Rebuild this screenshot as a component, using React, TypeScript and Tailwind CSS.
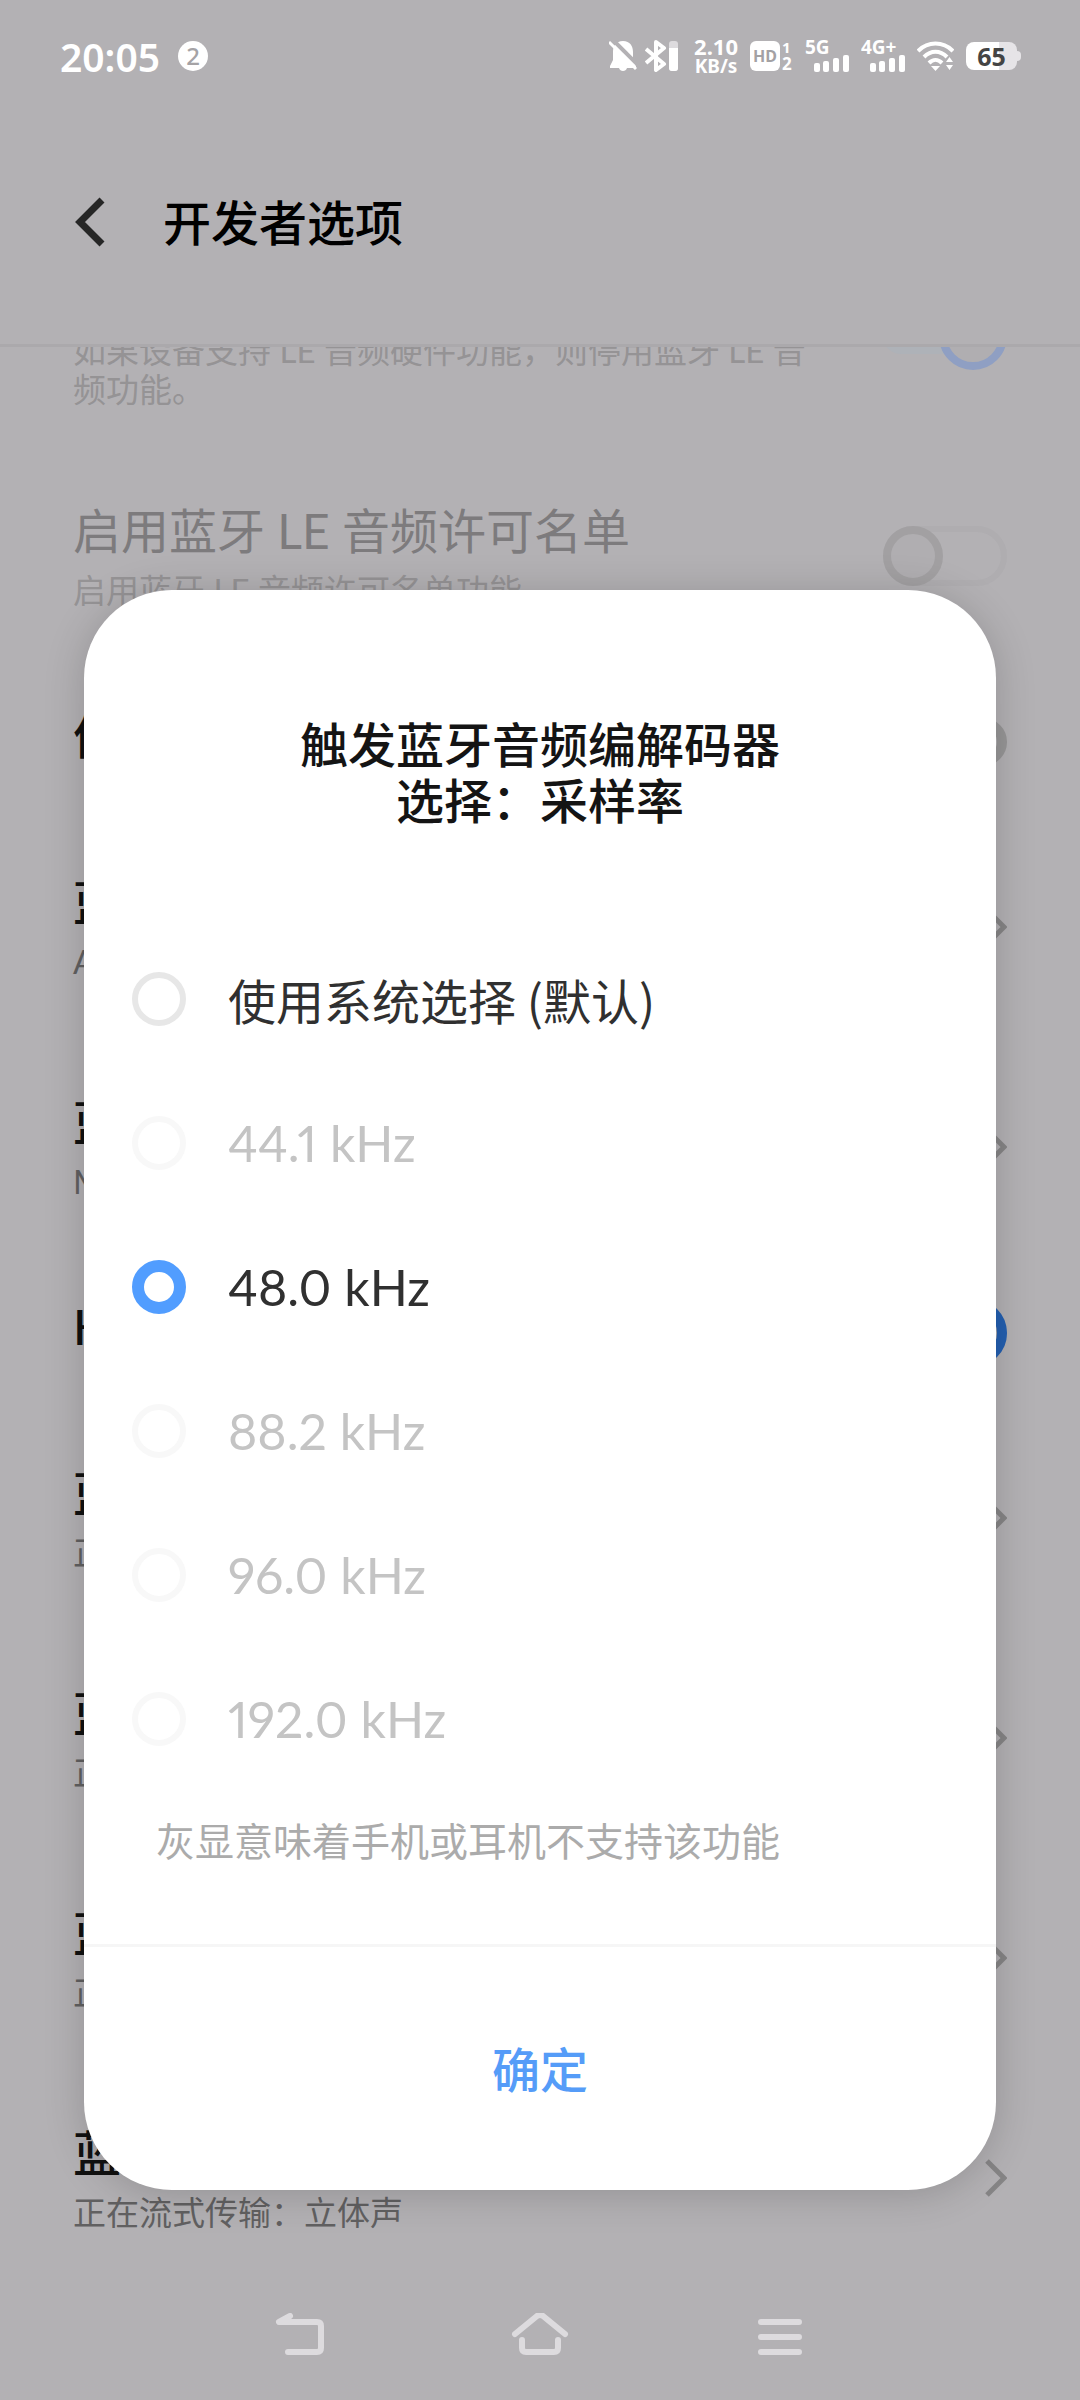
import React, { useState } from 'react';
import clsx from 'clsx';

interface Setting {
  title: string;
  summary?: string;
  control: 'on' | 'off' | 'link';
  disabled?: boolean;
}

const settings: Setting[] = [
  {
    title: '停用蓝牙 LE 音频',
    summary: '如果设备支持 LE 音频硬件功能，则停用蓝牙 LE 音频功能。',
    control: 'on',
    disabled: true,
  },
  { title: '启用蓝牙 LE 音频许可名单', summary: '启用蓝牙 LE 音频许可名单功能', control: 'off', disabled: true },
  { title: '停用绝对音量功能', control: 'off' },
  { title: '蓝牙 AVRCP 版本', summary: 'AVRCP 1.5（默认）', control: 'link' },
  { title: '蓝牙 MAP 版本', summary: 'MAP 1.2（默认）', control: 'link' },
  { title: 'HD 音频', control: 'on' },
  { title: '蓝牙音频编解码器', summary: '正在流式传输：AAC', control: 'link' },
  { title: '蓝牙音频采样率', summary: '正在流式传输：48.0 kHz', control: 'link' },
  { title: '蓝牙音频每样本位数', summary: '正在流式传输：16 位', control: 'link' },
  { title: '蓝牙音频声道模式', summary: '正在流式传输：立体声', control: 'link' },
];

const sampleRates = [
  { id: 'default', label: '使用系统选择 (默认)', disabled: false },
  { id: '44.1', label: '44.1 kHz', disabled: true },
  { id: '48.0', label: '48.0 kHz', disabled: false },
  { id: '88.2', label: '88.2 kHz', disabled: true },
  { id: '96.0', label: '96.0 kHz', disabled: true },
  { id: '192.0', label: '192.0 kHz', disabled: true },
];

const Signal: React.FC<{ label: string }> = ({ label }) => (
  <svg width="44" height="36" viewBox="0 0 44 36" fill="#fff">
    <text x="0" y="16" fontSize="19" fontWeight="700" fontFamily="Noto Sans, sans-serif">{label}</text>
    <rect x="9" y="25" width="6" height="9" rx="2" />
    <rect x="18" y="23" width="6" height="11" rx="2" />
    <rect x="28" y="20" width="6" height="14" rx="2" />
    <rect x="38" y="17" width="6" height="17" rx="2" />
  </svg>
);

const StatusBar = () => (
  <div className="flex h-28 shrink-0 items-center justify-between pr-[59px] pl-[60px] text-white">
    <div className="flex items-center gap-[18px] font-['Noto_Sans']">
      <span className="text-[39px] leading-none font-semibold">20:05</span>
      <span className="flex size-[30px] items-center justify-center rounded-full bg-white text-[24px] leading-none font-medium text-[#a5a3a6]">
        2
      </span>
    </div>
    <div className="flex items-center gap-3">
      <div className="mr-1 flex items-center gap-2">
        <svg width="28" height="32" viewBox="0 0 28 32">
          <path d="M14 1C7 1 4 6 4 12v8l-3 6v2h9c1 4 7 4 8 0h9v-2l-3-6v-8C24 6 21 1 14 1z" fill="#fff" />
          <path d="M3 -1l27 27" stroke="#b3b1b4" strokeWidth="4" />
          <path d="M0 2l27 27" stroke="#fff" strokeWidth="3" />
        </svg>
        <svg width="33" height="32" viewBox="0 0 33 32" fill="none">
          <path d="M1 9l18 15-8 6V2l8 6L1 23" stroke="#fff" strokeWidth="4" strokeLinejoin="round" />
          <rect x="24" y="1" width="9" height="30" rx="3" fill="#dddbde" />
          <path d="M24 8h9v20a3 3 0 0 1-3 3h-3a3 3 0 0 1-3-3z" fill="#fff" />
        </svg>
      </div>
      <div className="flex flex-col items-center font-['Noto_Sans'] font-bold">
        <span className="text-[22px] leading-5">2.10</span>
        <span className="text-[19px] leading-5">KB/s</span>
      </div>
      <svg width="43" height="32" viewBox="0 0 43 32" fontFamily="Noto Sans, sans-serif" fontWeight="700" fill="#fff">
        <rect x="0" y="1" width="30" height="30" rx="6" />
        <text x="3" y="22" fontSize="16" fill="#a3a1a4">HD</text>
        <text x="32" y="13" fontSize="15">1</text>
        <text x="32" y="30" fontSize="17">2</text>
      </svg>
      <Signal label="5G" />
      <Signal label="4G+" />
      <svg width="37" height="32" viewBox="0 0 37 32" fill="none" stroke="#fff" strokeWidth="4">
        <path d="M1 11c10-10 25-10 35 0" />
        <path d="M7 17c7-7 16-7 23 0" />
        <path d="M12 23c4-4 9-4 13 0" />
        <path d="M14 26h9l-4.500 5z" fill="#fff" stroke="none" />
        <path d="M29 22l3.500-5 3.500 5zM29 25h7l-3.500 5z" fill="#fff" stroke="none" />
      </svg>
      <div className="flex items-center">
        <span className="flex h-7 w-[51px] items-center justify-center rounded-lg bg-linear-to-r from-white from-65% to-[#e6e4e7] to-65% font-['Noto_Sans'] text-[25px] leading-none font-bold text-[#444]">
          65
        </span>
        <span className="h-2.5 w-1 rounded-r bg-[#e6e4e7]" />
      </div>
    </div>
  </div>
);

const Toggle: React.FC<{ label: string; on: boolean; disabled?: boolean }> = ({ label, on, disabled }) => (
  <button
    role="switch"
    aria-checked={on}
    aria-label={label}
    disabled={disabled}
    className={clsx(
      'flex w-[124px] shrink-0 items-center rounded-full',
      on && 'h-9 justify-end',
      on && (disabled ? 'bg-[#aeb2b8]' : 'bg-[#7f99bd]'),
      !on && (disabled ? 'h-[60px] border-[6px] border-[#acaaad]/60' : 'h-12 border-[10px] border-[#979697]')
    )}
  >
    <span
      className={clsx(
        'shrink-0 rounded-full bg-[#b0aeb1]',
        on ? 'size-[68px]' : '-ml-1.5 size-[60px]',
        on && (disabled ? 'border-8 border-[#8f9fc3]' : 'border-[10px] border-[#235fb0]'),
        !on && (disabled ? 'border-8 border-[#a2a0a2]' : 'border-8 border-[#979597]')
      )}
    />
  </button>
);

const SettingRow: React.FC<{ setting: Setting }> = ({ setting }) => {
  const { title, summary, control, disabled } = setting;
  return (
    <li
      className={clsx(
        "flex shrink-0 items-center justify-between px-[73px] font-['Lato','Noto_Sans_CJK_SC',sans-serif]",
        summary ? 'h-[220px]' : 'h-[151px]'
      )}
    >
      <div className={clsx('flex max-w-[740px] flex-col gap-3', !summary && 'pb-3')}>
        <h2
          className={clsx(
            'text-[48px] leading-[56px]',
            disabled ? 'font-normal text-[#7d7b7d]' : 'font-medium text-[#111]'
          )}
        >
          {title}
        </h2>
        {summary && (
          <p className={clsx('text-[33px] leading-[39px]', disabled ? 'text-[#959395]' : 'text-[#616061]')}>
            {summary}
          </p>
        )}
      </div>
      {control === 'link' ? (
        <svg width="22" height="38" viewBox="0 0 22 38" fill="none" stroke="#868586" strokeWidth="5">
          <path d="M2 2l17 17L2 36" />
        </svg>
      ) : (
        <Toggle label={title} on={control === 'on'} disabled={disabled} />
      )}
    </li>
  );
};

const NavBar = () => (
  <nav className="flex h-28 shrink-0 items-center justify-center pb-3.5">
    <button aria-label="返回" className="flex w-60 justify-center">
      <svg width="52" height="48" viewBox="0 0 52 48" fill="none" stroke="#dddbde" strokeWidth="6" strokeLinecap="round" strokeLinejoin="round">
        <path d="M16 3L5 9h38q4 0 4 4v22q0 4-4 4H14" />
      </svg>
    </button>
    <button aria-label="主屏幕" className="flex w-60 justify-center">
      <svg width="60" height="48" viewBox="0 0 60 48" fill="none" stroke="#dddbde" strokeWidth="6" strokeLinecap="round" strokeLinejoin="round">
        <path d="M5 21L27 3q3-2 6 0l22 18M12 27v8q0 4 4 4h28q4 0 4-4v-8" />
      </svg>
    </button>
    <button aria-label="最近任务" className="flex w-60 justify-center">
      <svg width="46" height="48" viewBox="0 0 46 48" stroke="#dddbde" strokeWidth="6" strokeLinecap="round">
        <path d="M4 9h38M4 24h38M4 39h38" />
      </svg>
    </button>
  </nav>
);

const SampleRateDialog = () => {
  const [selected, setSelected] = useState('48.0');

  return (
    <div
      role="dialog"
      aria-labelledby="dialog-title"
      className="absolute inset-x-[84px] bottom-[210px] overflow-hidden rounded-[88px] bg-white pt-[124px] shadow-[0_4px_40px_rgba(0,0,0,0.18)]"
    >
      <h2 id="dialog-title" className="text-center text-[48px] leading-[56px] font-medium text-[#141414]">
        触发蓝牙音频编解码器
        <br />
        选择：采样率
      </h2>
      <div className="mt-[101px] flex flex-col">
        {sampleRates.map((rate) => (
          <label
            key={rate.id}
            className={clsx(
              'flex h-36 items-center gap-[42px] px-12',
              rate.disabled ? 'text-[#c4c4c4]' : 'text-[#303030]',
              rate.id === 'default' ? 'text-[48px]' : "font-['Lato'] text-[50px] proportional-nums"
            )}
          >
            <input
              type="radio"
              name="sample-rate"
              value={rate.id}
              checked={selected === rate.id}
              disabled={rate.disabled}
              onChange={() => setSelected(rate.id)}
              className="size-[54px] shrink-0 appearance-none rounded-full border-[6px] border-[#e7e7e7] checked:border-[12px] checked:border-[#519dff] disabled:border-[#f8f8f8]"
            />
            <span>{rate.label}</span>
          </label>
        ))}
      </div>
      <p className="px-[72px] pt-5 pb-[77px] text-[39px] leading-[56px] text-[#ababab]">
        灰显意味着手机或耳机不支持该功能
      </p>
      <button className="h-[246px] w-full border-t-[3px] border-[#f6f6f6] pb-1 text-[48px] font-medium text-[#559cf8]">
        确定
      </button>
    </div>
  );
};

export default function App() {
  return (
    <div className="relative flex h-screen flex-col overflow-hidden bg-[#b3b1b4] font-['Noto_Sans_CJK_SC',sans-serif]">
      <StatusBar />
      <header className="flex h-[235px] shrink-0 items-center gap-[58px] border-b-[3px] border-[#aba9ac] pb-3 pl-[75px]">
        <button aria-label="返回">
          <svg width="30" height="50" viewBox="0 0 30 50" fill="none" stroke="#262626" strokeWidth="7">
            <path d="M27 3L5 25l22 22" />
          </svg>
        </button>
        <h1 className="pb-1 text-[48px] leading-[64px] font-medium text-black">开发者选项</h1>
      </header>
      {/* list is scrolled to its end, the first row slides under the header */}
      <ul className="flex min-h-0 flex-1 flex-col justify-end overflow-hidden">
        {settings.map((setting) => (
          <SettingRow key={setting.title} setting={setting} />
        ))}
      </ul>
      <NavBar />
      <SampleRateDialog />
    </div>
  );
}
